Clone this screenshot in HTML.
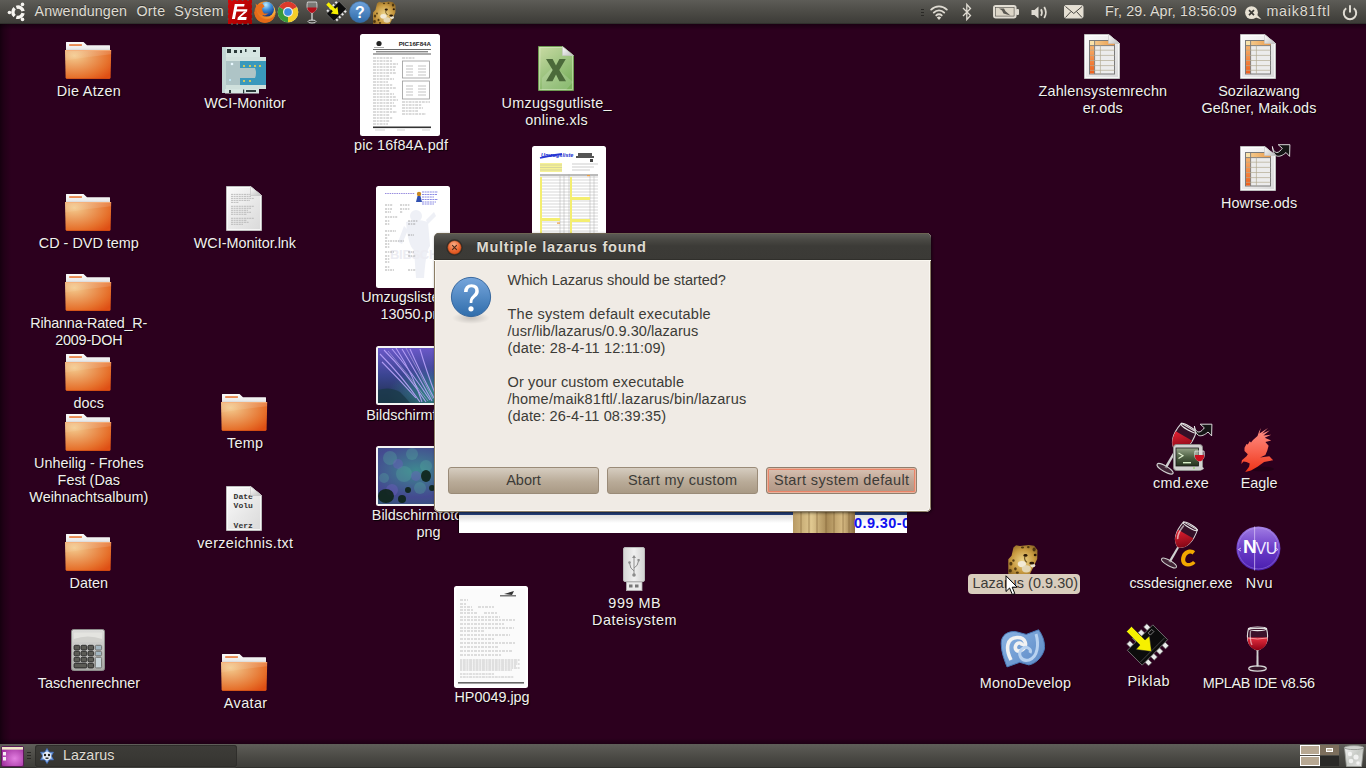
<!DOCTYPE html>
<html><head><meta charset="utf-8">
<style>
*{margin:0;padding:0;box-sizing:border-box}
html,body{width:1366px;height:768px;overflow:hidden;background:#2c001e;font-family:"Liberation Sans",sans-serif}
.abs{position:absolute}
#top{position:absolute;left:0;top:0;width:1366px;height:24px;background:linear-gradient(#5d5c57,#4a4944 55%,#3d3c38 95%,#30302c 96%)}
#bot{position:absolute;left:0;top:744px;width:1366px;height:24px;background:linear-gradient(#5f5e59,#4c4b46 50%,#3e3d39 95%,#30302c 96%)}
.pt{position:absolute;top:3px;font-size:14.3px;color:#dfdbd2;line-height:17px;white-space:pre;text-shadow:0 -1px 0 rgba(0,0,0,.35)}
.lbl{position:absolute;font-size:14.4px;line-height:17px;color:#f2f0ee;text-align:center;white-space:pre;text-shadow:1px 1px 1px rgba(0,0,0,.9)}
svg{position:absolute;overflow:visible}
#dlg{position:absolute;left:434px;top:233px;width:497px;height:279px;border-radius:5px 5px 5px 5px;background:#f0ebe5;box-shadow:inset 0 0 0 1px #8c7e66, inset 0 0 0 2px #faf7f2, 1px 1px 3px rgba(0,0,0,.55);overflow:hidden}
#dlg .tb{position:absolute;left:0;top:0;width:497px;height:27px;background:linear-gradient(#5a5954 4%,#4a4944 25%,#3c3b37 50%,#3b3a36);border-bottom:1px solid #302f2b;box-shadow:0 1px 0 #faf7f0, inset 0 1px 0 #6c6452}
#dlg .tt{position:absolute;left:42.5px;top:6px;font-weight:bold;font-size:14.6px;line-height:17px;color:#dfdbd2;white-space:pre;letter-spacing:0.73px;text-shadow:0 -1px 0 rgba(0,0,0,.5)}
#dlg .msg{position:absolute;left:73.5px;top:38.5px;font-size:14.55px;line-height:17px;color:#3c3b37;white-space:pre}
.btn{position:absolute;top:234px;height:27px;border:1px solid #9a8b78;border-radius:3px;background:linear-gradient(#d6cdc0,#b9ab98 55%,#a99a85);font-size:14.5px;line-height:25px;color:#3c3b37;text-align:center;white-space:pre}
</style></head><body>


<svg width="0" height="0" style="position:absolute">
 <defs>
  <linearGradient id="ftab" x1="0" y1="0" x2="0" y2="1"><stop offset="0" stop-color="#fbfbfb"/><stop offset="0.7" stop-color="#ececec"/><stop offset="1" stop-color="#cfcfcf"/></linearGradient>
  <radialGradient id="fbody" cx="0.2" cy="0.2" r="1.0"><stop offset="0" stop-color="#f4cb8e"/><stop offset="0.35" stop-color="#eca061"/><stop offset="0.75" stop-color="#e6712c"/><stop offset="1" stop-color="#df4f14"/></radialGradient>
  <linearGradient id="fshine" x1="0" y1="0" x2="0" y2="1"><stop offset="0" stop-color="#fff" stop-opacity="0.18"/><stop offset="1" stop-color="#fff" stop-opacity="0.05"/></linearGradient>
  <radialGradient id="cheg" cx="0.5" cy="0.55" r="0.65"><stop offset="0" stop-color="#ecd48a"/><stop offset="0.6" stop-color="#c89a40"/><stop offset="1" stop-color="#8a6424"/></radialGradient>
  <symbol id="cheetah" viewBox="0 0 24 24" overflow="visible">
    <path d="M1 24 L1 12.5 L3.5 9.8 L5 3.5 L7 1.8 L10 2.4 L17 1.6 L21 2.2 L23.6 5.5 L23.4 12.4 L17.8 24 Z" fill="url(#cheg)"/>
    <g fill="#3a2608" opacity=".8"><ellipse cx="3" cy="16" rx="1.2" ry="1.5"/><ellipse cx="2.5" cy="21.5" rx="1.3" ry="1.4"/><ellipse cx="6.5" cy="20" rx="1" ry="1.2"/><ellipse cx="8" cy="23" rx="1.2" ry="0.9"/><ellipse cx="5" cy="13.5" rx="0.9" ry="1"/><ellipse cx="12" cy="3.5" rx="1.2" ry="0.8"/><ellipse cx="16.5" cy="3.2" rx="1" ry="0.8"/><ellipse cx="21" cy="5" rx="1.2" ry="1.5"/></g>
    <ellipse cx="11.5" cy="16.3" rx="3.2" ry="2.4" fill="#f2ead6"/>
    <ellipse cx="15" cy="20" rx="3.5" ry="2.8" fill="#e6dcc0" opacity=".9"/>
    <ellipse cx="20" cy="17.5" rx="2" ry="1.4" fill="#ece4d0"/>
    <g fill="#2a1806"><ellipse cx="14.3" cy="9.6" rx="1.6" ry="1.1"/><ellipse cx="21.8" cy="9.3" rx="1.1" ry="1"/><ellipse cx="19.2" cy="15.6" rx="1.9" ry="1.1"/></g>
    <path d="M13.8 10.5 Q13 13 15.5 15" stroke="#3a2608" stroke-width="0.9" fill="none" opacity=".7"/>
  </symbol>
  <symbol id="folder" viewBox="0 0 46 38" overflow="visible">
    <path d="M1 0.3 Q1 0 1.5 0 L18.5 0 L22 3.2 L44.6 3.2 Q45 3.2 45 3.7 L45 9 L1 9Z" fill="url(#ftab)"/>
    <rect x="4.2" y="2.1" width="12.7" height="1.9" fill="#e98a52"/>
    <path d="M0 8 L46.2 8 L45.6 35.6 Q45.5 37 44.2 37 L2 37 Q0.7 37 0.6 35.6Z" fill="url(#fbody)"/>
    <path d="M0.05 8 L46.2 8 L46 12.2 Q24 14.5 0.2 18.5Z" fill="url(#fshine)"/>
    <path d="M0.3 8.5 L45.9 8.5" stroke="#f6b07a" stroke-width="1" opacity=".8"/>
    <path d="M2 36.5 L44.2 36.5" stroke="#c4420e" stroke-width="1" opacity=".5"/>
  </symbol>
 </defs>
</svg>

<!-- DESKTOP -->
<div class="abs" style="left:0;top:24px;width:11px;height:720px;background:linear-gradient(to right,rgba(0,0,0,.5),rgba(0,0,0,.25) 35%,rgba(0,0,0,0))"></div>
<div class="abs" style="left:0;top:24px;width:1366px;height:6px;background:linear-gradient(rgba(0,0,0,.38),rgba(0,0,0,0))"></div>
<div class="abs" style="left:0;top:738px;width:1366px;height:6px;background:linear-gradient(rgba(0,0,0,0),rgba(0,0,0,.32))"></div>
<div id="desk">
<svg style="left:65px;top:41.7px" width="46" height="38"><use href="#folder"/></svg>
<svg style="left:65px;top:194.4px" width="46" height="38"><use href="#folder"/></svg>
<svg style="left:65px;top:274.0px" width="46" height="38"><use href="#folder"/></svg>
<svg style="left:65px;top:354.0px" width="46" height="38"><use href="#folder"/></svg>
<svg style="left:65px;top:414.0px" width="46" height="38"><use href="#folder"/></svg>
<svg style="left:65px;top:534.0px" width="46" height="38"><use href="#folder"/></svg>
<svg style="left:221px;top:394.1px" width="46" height="38"><use href="#folder"/></svg>
<svg style="left:221px;top:654.0px" width="46" height="38"><use href="#folder"/></svg>
<svg width="0" height="0" style="position:absolute">
 <defs>
  <linearGradient id="pageg" x1="0" y1="0" x2="1" y2="1"><stop offset="0" stop-color="#fbfbfb"/><stop offset="1" stop-color="#d9d9d9"/></linearGradient>
  <linearGradient id="foldg" x1="0" y1="0" x2="1" y2="1"><stop offset="0" stop-color="#ffffff"/><stop offset="1" stop-color="#bdbdbd"/></linearGradient>
  <linearGradient id="odsh" x1="0" y1="0" x2="1" y2="0"><stop offset="0" stop-color="#f6d49a"/><stop offset="1" stop-color="#eb9a4a"/></linearGradient>
  <linearGradient id="odsc" x1="0" y1="0" x2="0" y2="1"><stop offset="0" stop-color="#f6c07a"/><stop offset="1" stop-color="#ef5f1c"/></linearGradient>
  <symbol id="page" viewBox="0 0 36 45" overflow="visible">
    <path d="M0.5 0.5 L24.5 0.5 L35.5 9.5 L35.5 44.5 L0.5 44.5Z" fill="url(#pageg)" stroke="#bdbdbd" stroke-width="1"/>
    <path d="M1.5 1.5 L24 1.5 L34.5 10 L34.5 43.5 L1.5 43.5Z" fill="none" stroke="#fff" stroke-width="1" opacity=".7"/>
    <path d="M24.5 0.5 L24.5 9.5 L35.5 9.5Z" fill="url(#foldg)" stroke="#c8c8c8" stroke-width="0.6"/>
  </symbol>
  <symbol id="ods" viewBox="0 0 36 45" overflow="visible">
    <use href="#page"/>
    <rect x="5.5" y="6.5" width="25" height="33.5" fill="#ececec" stroke="#7a7a7a" stroke-width="1"/>
    <rect x="6" y="7" width="24.5" height="4.6" fill="url(#odsh)"/>
    <rect x="6" y="7" width="4.6" height="32.5" fill="url(#odsc)"/>
    <rect x="6" y="7" width="4.6" height="4.6" fill="#f9e2aa"/>
    <g stroke="#7a7a7a" stroke-width="0.9"><path d="M10.6 6.5 V40 M5.5 11.6 H30.5"/></g>
    <g stroke="#b3ab92" stroke-width="0.7"><path d="M16.4 11.6 V40 M6 16.2 H30.5 M6 21.4 H30.5 M6 26.5 H30.5 M6 31.6 H30.5 M6 36.3 H30.5"/></g>
    <path d="M24.5 0.5 L24.5 9.5 L35.5 9.5Z" fill="url(#foldg)" stroke="#c8c8c8" stroke-width="0.6"/>
  </symbol>
  <symbol id="lines" viewBox="0 0 36 45" overflow="visible">
    <g stroke="#a8a8a8" stroke-width="0.7" stroke-dasharray="2 0.6">
      <path d="M5 8.4 H30 M5 10.4 H25 M5 12.4 H28 M5 14.4 H24 M5 16.4 H13 M5 20.3 H28 M5 22.3 H25 M5 24.3 H22 M5 26.3 H25 M5 28.3 H21 M5 32.3 H28 M5 34.3 H21 M5 36.3 H23 M5 38.3 H17"/>
    </g>
  </symbol>
  <symbol id="symlink" viewBox="4 3.5 18.5 13" overflow="visible">
    <path d="M4.4 6 C5 10 7 12 9 12 C11 12 13 9.5 14.3 7.8 L10.2 4.2 L21.9 4.2 L21.6 15.9 L18 12 C15 15 11 16.5 8.6 15.4 C6 14 4.5 10 4.4 6Z" fill="#141414" stroke="#ececec" stroke-width="0.9"/>
  </symbol>
  <linearGradient id="thumbsh" x1="0" y1="0" x2="0" y2="1"><stop offset="0" stop-color="#fff"/><stop offset="1" stop-color="#f4f4f4"/></linearGradient>
 </defs>
</svg>

<!-- WCI-Monitor device -->
<svg style="left:222px;top:46px" width="44" height="48" viewBox="0 0 44 48">
  <rect x="1" y="1" width="37" height="10" fill="#d6e6e2"/>
  <rect x="0" y="1" width="4" height="46" fill="#c2d6d4"/>
  <g fill="#2b3a3a"><rect x="5" y="3" width="4" height="4"/><rect x="12" y="4" width="3" height="3"/><rect x="18" y="4" width="2" height="3"/><rect x="23" y="3" width="1.5" height="3"/><rect x="31" y="4" width="3" height="2"/></g>
  <rect x="4" y="11" width="40" height="4" fill="#d2e2de"/>
  <rect x="4" y="15" width="40" height="24" fill="#aec4c6"/>
  <path d="M18 15 H44 V39 H18 V32 H33 Q35 27 33 22 H18Z" fill="#3a98bc"/>
  <g fill="#f2d44a"><circle cx="22" cy="20" r="1.1"/><circle cx="28" cy="20" r="1.1"/><circle cx="33" cy="20" r="1.1"/><circle cx="38" cy="20" r="1.1"/><circle cx="22" cy="35" r="1.1"/><circle cx="28" cy="35" r="1.1"/></g>
  <circle cx="10" cy="18" r="1.3" fill="#e8f8ff"/><circle cx="8" cy="34" r="1" fill="#c8f0ff"/>
  <rect x="4" y="39" width="40" height="4" fill="#cfe0dc"/>
  <rect x="3" y="43" width="34" height="4.5" fill="#d6e6e2"/>
  <g fill="#2b3a3a"><rect x="7" y="44" width="2" height="3"/><rect x="21" y="43.5" width="1.2" height="4"/><rect x="24" y="44" width="10" height="2"/></g>
</svg>

<!-- WCI-Monitor.lnk text doc -->
<svg style="left:226px;top:186px" width="36" height="45" viewBox="0 0 36 45"><use href="#page"/><use href="#lines"/><path d="M24.5 0.5 L24.5 9.5 L35.5 9.5Z" fill="url(#foldg)" stroke="#c8c8c8" stroke-width="0.6"/></svg>

<!-- verzeichnis.txt -->
<svg style="left:226px;top:486px" width="36" height="45" viewBox="0 0 36 45"><use href="#page"/>
  <g font-family="Liberation Mono" font-weight="bold" font-size="8" fill="#333"><text x="7.6" y="13.2">Date</text><text x="7.6" y="22">Volu</text><text x="7.6" y="42">Verz</text></g>
  <path d="M24.5 0.5 L24.5 9.5 L35.5 9.5Z" fill="url(#foldg)" stroke="#c8c8c8" stroke-width="0.6"/></svg>

<!-- Taschenrechner calculator -->
<svg style="left:71px;top:629px" width="34" height="42" viewBox="0 0 34 42">
  <defs><linearGradient id="calg" x1="0" y1="0" x2="0" y2="1"><stop offset="0" stop-color="#dcdcda"/><stop offset="1" stop-color="#a9a9a6"/></linearGradient></defs>
  <rect x="0.5" y="0.5" width="33" height="41" rx="2" fill="url(#calg)" stroke="#8c8c8a" stroke-width="1"/>
  <rect x="2.6" y="3.5" width="28.6" height="9.5" rx="1" fill="#e4e4e0"/>
  <path d="M2.6 10 Q17 5 31.2 10 V13 H2.6Z" fill="#d0d0cc"/>
  <g fill="#5b5b55" stroke="#262626" stroke-width="0.9">
    <rect x="3.1" y="16.3" width="5.6" height="4.7" rx="1.2"/><rect x="10" y="16.3" width="5.7" height="4.7" rx="1.2"/><rect x="17" y="16.3" width="5.6" height="4.7" rx="1.2"/>
    <rect x="3.1" y="22.3" width="5.6" height="4.5" rx="1.2"/><rect x="10" y="22.3" width="5.7" height="4.5" rx="1.2"/><rect x="17" y="22.3" width="5.6" height="4.5" rx="1.2"/>
    <rect x="3.1" y="28.3" width="5.6" height="4.5" rx="1.2"/><rect x="10" y="28.3" width="5.7" height="4.5" rx="1.2"/><rect x="17" y="28.3" width="5.6" height="4.5" rx="1.2"/>
    <rect x="3.1" y="34.3" width="12.6" height="4.6" rx="1.2"/><rect x="17" y="34.3" width="5.6" height="4.6" rx="1.2"/>
  </g>
  <g stroke="#6a6a66" stroke-width="0.9"><rect x="24.3" y="16.3" width="6.3" height="4.7" rx="1.2" fill="#a3b6c0"/><rect x="24.3" y="22.3" width="6.3" height="4.5" rx="1.2" fill="#a3b6c0"/><rect x="24.3" y="28.3" width="6.3" height="10.6" rx="1.2" fill="#c9d5da"/></g>
</svg>

<!-- pic 16f84A.pdf thumbnail -->
<svg style="left:360px;top:34px" width="80" height="102" viewBox="0 0 80 102">
  <rect x="0" y="0" width="80" height="102" rx="2.5" fill="#fff"/>
  <circle cx="19" cy="9.5" r="2.6" fill="#222"/><rect x="14" y="13" width="10" height="0.6" fill="#777"/>
  <text x="71" y="12" font-family="Liberation Sans" font-weight="bold" font-size="6.2" fill="#222" text-anchor="end">PIC16F84A</text>
  <rect x="13" y="15" width="58" height="0.8" fill="#444"/>
  <rect x="16" y="17" width="52" height="1.4" fill="#8a8a8a"/>
  <rect x="13" y="19.6" width="58" height="0.8" fill="#333"/>
  <g stroke="#9a9a9a" stroke-width="0.7" stroke-dasharray="3 0.8 2 0.8">
   <path d="M13 24 H33 M13 27 H32 M13 30 H38 M13 33 H36 M13 36 H35 M13 39 H36 M13 42 H30 M13 45 H34 M13 48 H28 M13 51 H33 M13 54 H36 M13 57 H30 M13 60 H34 M13 63 H36 M13 66 H38 M13 69 H34 M13 72 H36 M13 75 H32 M13 78 H37 M13 81 H30 M13 84 H33 M13 87 H30 M13 90 H28"/>
   <path d="M42 24 H55 M42 68 H70 M42 71 H62 M42 74 H63 M42 77 H58 M42 80 H66"/>
  </g>
  <rect x="42.5" y="27" width="27" height="17" fill="none" stroke="#999" stroke-width="0.8"/>
  <rect x="42.5" y="47" width="27" height="18" fill="none" stroke="#999" stroke-width="0.8"/>
  <g stroke="#aaa" stroke-width="0.7"><path d="M46 32 H53 M58 32 H66 M46 35 H53 M58 35 H66 M46 38 H53 M58 38 H66 M46 41 H53 M58 41 H66 M46 52 H53 M58 52 H66 M46 55 H53 M58 55 H66 M46 58 H53 M58 58 H66 M46 61 H53 M58 61 H66"/></g>
  <rect x="13" y="92.5" width="58" height="1.6" fill="#333"/>
  <g stroke="#bbb" stroke-width="0.6"><path d="M15 96 H25 M37 96 H45 M62 96 H70"/></g>
</svg>

<!-- Umzugsgutliste xls -->
<svg style="left:538px;top:46px" width="36" height="45" viewBox="0 0 36 45">
  <defs><linearGradient id="xlsg" x1="0" y1="0" x2="0.6" y2="1"><stop offset="0" stop-color="#cadba4"/><stop offset="0.5" stop-color="#a2c684"/><stop offset="1" stop-color="#7cb25e"/></linearGradient></defs>
  <path d="M0.5 0.5 L24.5 0.5 L35.5 9.5 L35.5 44.5 L0.5 44.5Z" fill="url(#xlsg)" stroke="#6e9a52" stroke-width="1"/>
  <path d="M2 1.5 L24 1.5 L34.5 10 L34.5 43.5 L1.5 43.5Z" fill="none" stroke="#e6f0d0" stroke-width="0.8" opacity=".6"/>
  <path d="M4 32 L16 20 L35 36 L28 44 L4 44Z" fill="#fff" opacity=".15"/>
  <path d="M8 13 H14.6 L18 19.5 L21.4 13 H27.8 L21.3 24 L28 35.2 H21.4 L18 28.6 L14.5 35.2 H8 L14.7 24Z" fill="#4b6a3a"/>
  <path d="M24.5 0.5 L24.5 9.5 L35.5 9.5Z" fill="url(#foldg)" stroke="#c8c8c8" stroke-width="0.6"/>
</svg>

<!-- Umzugsliste png thumb behind dialog -->
<svg style="left:532px;top:146px" width="74" height="102" viewBox="0 0 74 102">
  <rect x="0" y="0" width="74" height="102" rx="2.5" fill="#fff"/>
  <path d="M8 12 Q20 9 30 8" stroke="#2a3ad8" stroke-width="1.8" fill="none"/>
  <text x="9" y="11" font-family="Liberation Sans" font-style="italic" font-weight="bold" font-size="5.5" fill="#2030d0">Umzugsliste</text>
  <g fill="#555"><rect x="46" y="7" width="14" height="3"/><rect x="44" y="10" width="18" height="2"/></g>
  <rect x="58" y="13" width="3" height="3" fill="#444"/>
  <g stroke="#999" stroke-width="0.5"><path d="M40 18 H66 M40 21 H62 M40 24 H58"/></g>
  <rect x="8" y="17" width="22" height="9" fill="#f6f296"/>
  <g stroke="#aaa" stroke-width="0.4"><path d="M8 19 H30 M8 21.5 H30 M8 24 H30"/></g>
  <rect x="8" y="28" width="58" height="2" fill="#bbb"/>
  <g stroke="#a8a8a8" stroke-width="0.45"><path d="M8 31 H66 M8 34 H66 M8 37 H66 M8 40 H66 M8 43 H66 M8 46 H66 M8 49 H66 M8 52 H66 M8 55 H66 M8 58 H66 M8 61 H66 M8 64 H66 M8 67 H66 M8 70 H66 M8 73 H66 M8 76 H66 M8 79 H66 M8 82 H66 M8 85 H66 M8 88 H66 M8 91 H66 M37 28 V94 M28 30 V94 M32 30 V94 M58 30 V94 M62 30 V94"/></g>
  <g fill="#f4ee70"><rect x="8" y="31" width="2" height="60"/><rect x="38" y="31" width="2" height="60"/><rect x="10" y="72" width="18" height="3"/><rect x="40" y="51" width="18" height="3"/><rect x="40" y="73" width="18" height="3"/></g>
  <g fill="#f0a040"><rect x="55" y="29" width="3" height="1.2"/><rect x="25" y="76.5" width="3" height="1.2"/></g>
</svg>

<!-- Umzugsliste_13050.png thumb -->
<svg style="left:376px;top:186px" width="74" height="102" viewBox="0 0 74 102">
  <rect x="0" y="0" width="74" height="102" rx="2.5" fill="#fff"/>
  <g fill="#eef0f6"><ellipse cx="40" cy="30" rx="6" ry="6"/><path d="M30 36 Q40 32 52 36 L54 60 Q50 64 48 92 L40 92 L38 64 Q32 60 30 36Z"/><path d="M28 40 L22 56 L26 58 L32 44Z"/><path d="M52 38 L60 30 L58 26 L50 34Z"/></g>
  <text x="14" y="73" font-family="Liberation Sans" font-weight="bold" font-size="13" fill="#ececf2" letter-spacing="-0.3">BIBSCH</text>
  <g stroke="#6a5ad0" stroke-width="0.7" stroke-dasharray="1.5 0.8"><path d="M9 7.5 H39"/></g>
  <circle cx="43" cy="8" r="2.2" fill="#c88820"/><path d="M41.5 10 L40 16 L46 16 L44.5 10Z" fill="#3050b0"/>
  <g stroke="#5a5ad8" stroke-width="0.7" stroke-dasharray="2 0.6"><path d="M46 6 H62 M46 8.5 H61 M46 11 H58 M46 13.5 H62 M46 16 H60 M46 18 H58"/></g>
  <g stroke="#777" stroke-width="0.6" stroke-dasharray="2 0.8 1.5 0.8"><path d="M9 19 H17 M24 19 H34 M9 23 H16 M24 23 H34 M9 26 H15 M24 26 H27 M9 31 H22 M9 35 H14 M32 35 H42 M9 38 H14 M32 38 H40 M9 45 H20 M9 49 H14 M32 49 H38 M9 52 H12 M9 55 H28 M9 58 H14 M9 61 H14 M9 66 H18 M32 66 H38 M9 70 H14 M32 70 H40 M9 73 H14 M9 76 H14 M9 81 H14 M9 84 H18 M32 84 H40"/></g>
</svg>

<!-- Bildschirmfoto thumbs (partly behind dialog) -->
<svg style="left:376px;top:346px" width="100" height="59" viewBox="0 0 100 59">
  <defs><linearGradient id="bs1" x1="0" y1="0" x2="0" y2="1"><stop offset="0" stop-color="#6a58c8"/><stop offset="0.5" stop-color="#3a4490"/><stop offset="1" stop-color="#1e3048"/></linearGradient>
  <radialGradient id="bs1t" cx="0.6" cy="0.85" r="0.5"><stop offset="0" stop-color="#3aa0a0" stop-opacity=".8"/><stop offset="1" stop-color="#3aa0a0" stop-opacity="0"/></radialGradient></defs>
  <rect x="0" y="0" width="100" height="59" rx="2.5" fill="#f4f4f4"/>
  <rect x="2" y="2" width="96" height="55" fill="url(#bs1)"/>
  <rect x="2" y="2" width="96" height="55" fill="url(#bs1t)"/>
  <g stroke="#c0a8ff" stroke-width="1.1" opacity=".85" fill="none">
    <path d="M4 8 Q26 30 44 56"/><path d="M8 4 Q30 26 50 56"/><path d="M16 3 Q34 24 54 54"/><path d="M26 3 Q40 26 56 55"/><path d="M34 3 Q44 26 58 52"/><path d="M44 3 Q50 24 60 50"/><path d="M6 16 Q24 34 40 52"/><path d="M20 2 Q38 30 46 56"/>
  </g>
  <g stroke="#e0d0ff" stroke-width="0.6" opacity=".7" fill="none"><path d="M12 5 Q32 28 52 55"/><path d="M30 2 Q42 24 57 53"/></g>
  <path d="M2 44 Q14 40 24 46 Q30 52 34 57 H2Z" fill="#1a3a48" opacity=".8"/>
</svg>
<svg style="left:376px;top:446px" width="100" height="60" viewBox="0 0 100 60">
  <defs><radialGradient id="bs2" cx="0.4" cy="0.4" r="0.8"><stop offset="0" stop-color="#3e8890"/><stop offset="0.6" stop-color="#444a90"/><stop offset="1" stop-color="#2e5a70"/></radialGradient></defs>
  <rect x="0" y="0" width="100" height="60" rx="2.5" fill="#f4f4f4"/>
  <rect x="2" y="2" width="96" height="56" fill="url(#bs2)"/>
  <g fill="#58b0a0" opacity=".3"><circle cx="14" cy="12" r="7"/><circle cx="36" cy="8" r="6"/><circle cx="28" cy="28" r="8"/><circle cx="8" cy="32" r="5"/><circle cx="50" cy="20" r="6"/><circle cx="44" cy="42" r="6"/></g>
  <g fill="#7060c0" opacity=".4"><circle cx="22" cy="18" r="5"/><circle cx="40" cy="30" r="5"/><circle cx="16" cy="44" r="6"/></g>
  <g fill="#0e2418" opacity=".9"><ellipse cx="10" cy="50" rx="8" ry="7"/><circle cx="26" cy="53" r="4"/><circle cx="32" cy="44" r="3"/><ellipse cx="50" cy="30" rx="5" ry="6"/><circle cx="56" cy="42" r="3"/></g>
</svg>

<!-- HP0049.jpg -->
<svg style="left:454px;top:586px" width="74" height="102" viewBox="0 0 74 102">
  <rect x="0" y="0" width="74" height="102" rx="2.5" fill="#fff"/>
  <rect x="2.5" y="2.5" width="69" height="97" fill="#fbfbfb"/>
  <path d="M50 8 L60 5 L58 9Z" fill="#333"/><rect x="46" y="9" width="16" height="1.5" fill="#777"/>
  <g stroke="#999" stroke-width="0.6" stroke-dasharray="3 1 2 1">
   <path d="M6 14 H14 M6 18 H12 M6 21 H18 M24 21 H40 M6 24 H20 M6 27 H24 M30 27 H44 M6 31 H46 M6 34 H62 M6 38 H50 M6 42 H60 M6 45 H30 M6 49 H56 M6 53 H40 M6 57 H62 M6 61 H44 M6 65 H58 M6 69 H48"/>
  </g>
  <g stroke="#8a8a8a" stroke-width="0.5" stroke-dasharray="2 0.7 3 0.7"><path d="M6 74 H66 M6 76 H64 M6 78 H66 M6 80 H62 M6 82 H66 M6 84 H58 M6 88 H40 M6 91 H60"/></g>
  <rect x="4" y="96" width="66" height="1.6" fill="#666"/>
</svg>

<!-- USB -->
<svg style="left:623px;top:547px" width="22" height="44" viewBox="0 0 22 44">
  <defs><linearGradient id="usbg" x1="0" y1="0" x2="1" y2="0"><stop offset="0" stop-color="#d4d4d4"/><stop offset="0.5" stop-color="#f0f0f0"/><stop offset="1" stop-color="#d2d2d2"/></linearGradient></defs>
  <rect x="0.5" y="0.5" width="21" height="34" rx="1.5" fill="url(#usbg)" stroke="#b8b8b8" stroke-width="1"/>
  <rect x="3.5" y="35" width="15.5" height="8.6" fill="#eaeaea" stroke="#b0b0b0" stroke-width="0.8"/>
  <rect x="6" y="37.5" width="3.5" height="3" fill="#777"/><rect x="12" y="37.5" width="3.5" height="3" fill="#777"/>
  <g stroke="#8c8c8c" stroke-width="1" fill="none"><path d="M11 10 V28 M11 24 Q7 22 6.5 16 M11 21 Q15 19 15.5 14"/></g>
  <path d="M11 8 L9 11 H13Z" fill="#8c8c8c"/><circle cx="11" cy="28" r="1.8" fill="#8c8c8c"/><circle cx="6.5" cy="15.5" r="1.3" fill="#8c8c8c"/><rect x="14.5" y="12" width="2.2" height="2.2" fill="#8c8c8c"/>
</svg>

<!-- ODS -->
<svg style="left:1084px;top:34px" width="36" height="45" viewBox="0 0 36 45"><use href="#ods"/></svg>
<svg style="left:1240px;top:34px" width="36" height="45" viewBox="0 0 36 45"><use href="#ods"/></svg>
<svg style="left:1240px;top:146px" width="36" height="45" viewBox="0 0 36 45"><use href="#ods"/></svg>
<svg style="left:1272px;top:143.5px" width="18.5" height="13" viewBox="0 0 18.5 13"><use href="#symlink"/></svg>

<!-- cmd.exe -->
<svg style="left:1150px;top:420px" width="66" height="58" viewBox="0 0 66 58">
  <defs>
    <linearGradient id="wineg" x1="0" y1="0" x2="1" y2="1"><stop offset="0" stop-color="#e02030"/><stop offset="1" stop-color="#6a0010"/></linearGradient>
    <linearGradient id="scrg" x1="0" y1="0" x2="0" y2="1"><stop offset="0" stop-color="#95a488"/><stop offset="0.5" stop-color="#4e6144"/><stop offset="1" stop-color="#26331f"/></linearGradient>
  </defs>
  <g transform="translate(-6 1) rotate(30 30 28) translate(30 28) scale(1.08) translate(-30 -28)">
    <path d="M24 4 L40 4 C42 14 42 24 32 29 C22 24 22 14 24 4Z" fill="rgba(60,30,50,.55)" stroke="#d8d8d8" stroke-width="1"/>
    <path d="M23.2 13 L40.8 13 C40.5 22 38 26.5 32 29 C26 26.5 23.5 22 23.2 13Z" fill="url(#wineg)"/>
    <ellipse cx="32" cy="4.5" rx="8" ry="1.8" fill="none" stroke="#e8e8e8" stroke-width="1.1"/>
    <path d="M31 29 L33 29 L33.2 47 L30.8 47Z" fill="#cfcfcf"/>
    <ellipse cx="32" cy="48" rx="8.5" ry="2.6" fill="rgba(80,60,70,.6)" stroke="#d0d0d0" stroke-width="1"/>
  </g>
  <rect x="23.5" y="24.5" width="29" height="26" rx="3" fill="#d2d2d0" stroke="#8a8a88" stroke-width="1"/>
  <rect x="26" y="28" width="22.5" height="18" fill="url(#scrg)" stroke="#1a1a1a" stroke-width="0.8"/>
  <path d="M28.5 33 L33 35.8 L28.5 38.6" fill="none" stroke="#e0f0d0" stroke-width="1.2"/>
  <rect x="33" y="42" width="8" height="1.4" fill="#d8f0c8"/>
  <circle cx="44" cy="48" r="0.8" fill="#7ad040"/>
  <path d="M45 31 L54 31 C55 36 54 40 49.5 41.5 C45 40 44 36 45 31Z" fill="rgba(230,230,230,.4)" stroke="#e0e0e0" stroke-width="0.8"/>
  <path d="M44.8 35 L54.2 35 C54 39 52.5 40.8 49.5 41.5 C46.5 40.8 45 39 44.8 35Z" fill="#c81020"/>
  <rect x="49" y="41.5" width="1.2" height="6" fill="#d0d0d0"/>
  <ellipse cx="49.6" cy="48.5" rx="4.2" ry="1.4" fill="#cfcfcf"/>
  <svg x="44" y="3.5" width="18.5" height="13" viewBox="0 0 18.5 13"><use href="#symlink"/></svg>
</svg>

<!-- Eagle -->
<svg style="left:1238px;top:425px" width="40" height="50" viewBox="0 0 40 50">
  <defs><linearGradient id="eagg" x1="0" y1="0" x2="0" y2="1"><stop offset="0" stop-color="#ff9088"/><stop offset="0.55" stop-color="#f8604c"/><stop offset="1" stop-color="#ee3418"/></linearGradient></defs>
  <ellipse cx="24" cy="44" rx="12" ry="2.5" fill="#000" opacity=".25"/>
  <path d="M22.8 2.9 L21.5 8.5 L30 2.9 L24.1 8.8 L31.9 5.2 L25.4 10.4 L33.2 9.8 L26.7 12.7 L33.2 15.6 L27.4 16.9 L30.6 20.8 L29.3 25.4 L27.4 30 L22.1 32.6 L31.3 31.3 L35.2 35.2 L26.1 37.1 L19.5 41.7 L13 45.6 L7.2 46.9 L11.1 41.7 L11.7 38.4 L8.5 37.1 L5.5 36.5 L3.3 39.1 L3.9 35.2 L8.5 31.3 L9.8 29.3 L6.5 26.1 L6.5 22.8 L8.5 18.9 L9.8 19.5 L11.7 16.3 L13 17.6 L15 15 L19.5 11.1 L20.8 7.2 Z" fill="url(#eagg)"/>
</svg>

<!-- cssdesigner -->
<svg style="left:1150px;top:520px" width="50" height="56" viewBox="0 0 50 56">
  <g transform="rotate(30 30 24)">
    <path d="M22 3 L38 3 C40 13 40 23 30 28 C20 23 20 13 22 3Z" fill="rgba(60,30,50,.55)" stroke="#d8d8d8" stroke-width="1"/>
    <path d="M21.2 12.5 L38.8 12.5 C38.5 21.5 36 25.5 30 28 C24 25.5 21.5 21.5 21.2 12.5Z" fill="url(#wineg)"/>
    <path d="M24 6 C23 12 23.5 18 25.5 21" stroke="#fff" stroke-width="1.6" opacity=".6" fill="none"/>
    <ellipse cx="30" cy="3.5" rx="8" ry="1.8" fill="none" stroke="#e8e8e8" stroke-width="1.1"/>
    <path d="M29 28 L31 28 L31.2 45 L28.8 45Z" fill="#cfcfcf"/>
    <ellipse cx="30" cy="46" rx="8.5" ry="2.6" fill="rgba(80,60,70,.6)" stroke="#d0d0d0" stroke-width="1"/>
  </g>
  <path d="M45 31.5 C43 28.5 35 28.5 32 35 C29.5 41 32 46.5 38 46.5 C41 46.5 44 45 45.5 43 L43 41 C41.5 42.5 40 43 38.5 43 C35.5 43 34.5 40.5 35.8 37 C37 33.5 41 32.5 42.5 34.5Z" fill="#f2a800"/>
</svg>

<!-- Nvu -->
<svg style="left:1236px;top:526px" width="45" height="45" viewBox="0 0 45 45">
  <defs><linearGradient id="nvug" x1="0" y1="0" x2="0" y2="1"><stop offset="0" stop-color="#a27ee4"/><stop offset="0.5" stop-color="#6a3cc8"/><stop offset="1" stop-color="#4a1eae"/></linearGradient></defs>
  <circle cx="22.4" cy="22.4" r="22" fill="url(#nvug)"/>
  <circle cx="22.4" cy="22.4" r="20.5" fill="none" stroke="#c0a8f0" stroke-width="0.6" opacity=".6"/>
  <rect x="18.2" y="0.5" width="0.9" height="44" fill="#d8c8f8" opacity=".8"/>
  <text x="7" y="28" font-family="Liberation Sans" font-weight="bold" font-size="19" fill="#fff" transform="scale(1 0.95)">N</text>
  <text x="19.6" y="28" font-family="Liberation Sans" font-size="16" fill="#f0eaff" letter-spacing="-0.5">VU</text>
  <path d="M5 22 L2.5 23.5 L5 25 M39.5 22 L42 23.5 L39.5 25" fill="none" stroke="#e8dcff" stroke-width="0.8"/>
</svg>

<!-- Lazarus cheetah + label pill -->
<svg style="left:1007px;top:543px" width="31" height="31" viewBox="0 0 24 24"><use href="#cheetah"/></svg>
<div class="abs" style="left:968px;top:574px;width:112px;height:20px;border-radius:4px;background:#d9cdbd"></div>
<div class="abs" style="left:972.5px;top:574.5px;font-size:14.4px;line-height:17px;color:#3c3b37;white-space:pre;letter-spacing:0.05px">Lazarus (0.9.30)</div>
<svg style="left:1005px;top:575px" width="14" height="21" viewBox="0 0 14 21">
  <path d="M1 0.8 L1 16.5 L4.6 13 L7.4 19.6 L9.8 18.6 L7.2 12.2 L12.2 12.2Z" fill="#fff" stroke="#000" stroke-width="1"/>
</svg>

<!-- MonoDevelop -->
<svg style="left:995px;top:622px" width="60" height="50" viewBox="0 0 60 50">
  <defs><linearGradient id="mdg" x1="0" y1="0" x2="1" y2="1"><stop offset="0" stop-color="#8cb4e4"/><stop offset="1" stop-color="#5a88c4"/></linearGradient></defs>
  <path d="M6.2 21.5 C6 13 13 8.5 21.5 9.8 L31.2 12.4 L43.6 7.8 C48 14 50 20 49.4 27.3 C47 36 40 42 33.8 42.9 L24.7 40.3 L12 44.9 C9 37 6.2 30 6.2 21.5Z" fill="url(#mdg)" stroke="#4a7ab8" stroke-width="1"/>
  <path d="M16 38 C10 26 12 16 22 15.5 C31 15 33 24 27 28 C22 31 19 27 21 23 C23 19.5 28 21 27 24" fill="none" stroke="#f2f2f2" stroke-width="3.6"/>
  <path d="M41 12 C44 22 43 35 34 38 C26 40 22 32 27 27 C31 23 37 27 35 31" fill="none" stroke="#b8d2f0" stroke-width="3"/>
</svg>

<!-- Piklab -->
<svg style="left:1120px;top:620px" width="60" height="54" viewBox="0 0 60 54">
  <g transform="translate(27.5 25) rotate(-45)">
    <g fill="#eaeaea" stroke="#555" stroke-width="0.6"><rect x="-14" y="10" width="4.5" height="5.5"/><rect x="-6" y="10" width="4.5" height="5.5"/><rect x="2" y="10" width="4.5" height="5.5"/><rect x="10" y="10" width="4.5" height="5.5"/>
    <rect x="-14" y="-15.5" width="4.5" height="5.5"/><rect x="-6" y="-15.5" width="4.5" height="5.5"/><rect x="2" y="-15.5" width="4.5" height="5.5"/><rect x="10" y="-15.5" width="4.5" height="5.5"/></g>
    <rect x="-18" y="-10.5" width="36" height="21" fill="#0c0c0c" stroke="#8a8a8a" stroke-width="0.7"/>
    <path d="M-17 7 H17" stroke="#666" stroke-width="0.6"/>
    <path d="M9 -8 h5 v3 h-5z" fill="none" stroke="#bbb" stroke-width="0.6"/>
  </g>
  <path d="M6.5 11.5 L11.5 6.5 L25 20 L29.5 16 L31.5 31.5 L16 29.5 L20 25 Z" fill="#f6f000" stroke="#1a1a30" stroke-width="0.5"/>
</svg>

<!-- MPLAB wine -->
<svg style="left:1245px;top:626px" width="26" height="47" viewBox="0 0 26 47">
  <defs><linearGradient id="wine2" x1="0" y1="0" x2="0" y2="1"><stop offset="0" stop-color="#e83040"/><stop offset="1" stop-color="#8a0014"/></linearGradient></defs>
  <path d="M3.5 2.5 L21.5 2.5 C23.5 10 24 20 12.5 24.5 C1 20 1.5 10 3.5 2.5Z" fill="rgba(80,40,60,.45)" stroke="#dcdcdc" stroke-width="1.1"/>
  <path d="M2.6 11.5 L22.4 11.5 C22.4 19 19.5 22.5 12.5 24.5 C5.5 22.5 2.6 19 2.6 11.5Z" fill="url(#wine2)"/>
  <path d="M3 12 Q12.5 14 22 12" stroke="#ffd0d0" stroke-width="0.8" fill="none" opacity=".8"/>
  <path d="M5.5 5 C5 10 5.5 16 7 19" stroke="#fff" stroke-width="1.3" opacity=".55" fill="none"/>
  <ellipse cx="12.5" cy="2.8" rx="9" ry="1.8" fill="none" stroke="#e8e8e8" stroke-width="1.1"/>
  <path d="M11.6 24.5 L13.4 24.5 L13.6 41 L11.4 41Z" fill="#d0d0d0"/>
  <ellipse cx="12.5" cy="42.5" rx="8.8" ry="2.6" fill="rgba(60,40,50,.5)" stroke="#d8d8d8" stroke-width="1.2"/>
</svg>

<div class="lbl" style="left:8.8px;top:83px;width:160px;letter-spacing:0.28px;text-indent:0.28px">Die Atzen</div>
<div class="lbl" style="left:8.8px;top:235px;width:160px">CD - DVD temp</div>
<div class="lbl" style="left:8.8px;top:315px;width:160px;letter-spacing:-0.19px;text-indent:-0.19px">Rihanna-Rated_R-
2009-DOH</div>
<div class="lbl" style="left:8.8px;top:395px;width:160px">docs</div>
<div class="lbl" style="left:8.8px;top:455px;width:160px">Unheilig - Frohes
Fest (Das
Weihnachtsalbum)</div>
<div class="lbl" style="left:8.8px;top:575px;width:160px">Daten</div>
<div class="lbl" style="left:8.9px;top:675px;width:160px">Taschenrechner</div>
<div class="lbl" style="left:165.0px;top:95px;width:160px;letter-spacing:0.09px;text-indent:0.09px">WCI-Monitor</div>
<div class="lbl" style="left:164.9px;top:235px;width:160px">WCI-Monitor.lnk</div>
<div class="lbl" style="left:165.0px;top:435px;width:160px;letter-spacing:0.27px;text-indent:0.27px">Temp</div>
<div class="lbl" style="left:165.2px;top:535px;width:160px;letter-spacing:0.32px;text-indent:0.32px">verzeichnis.txt</div>
<div class="lbl" style="left:165.5px;top:695px;width:160px;letter-spacing:0.4px;text-indent:0.4px">Avatar</div>
<div class="lbl" style="left:321.0px;top:137px;width:160px;letter-spacing:0.15px;text-indent:0.15px">pic 16f84A.pdf</div>
<div class="lbl" style="left:476.6px;top:95px;width:160px;letter-spacing:0.26px;text-indent:0.26px">Umzugsgutliste_
online.xls</div>
<div class="lbl" style="left:334.5px;top:306px;width:160px">13050.png</div>
<div class="lbl" style="left:348.5px;top:524px;width:160px">png</div>
<div class="lbl" style="left:412.0px;top:689px;width:160px">HP0049.jpg</div>
<div class="lbl" style="left:554.5px;top:595px;width:160px;letter-spacing:0.53px;text-indent:0.53px">999 MB
Dateisystem</div>
<div class="lbl" style="left:1022.8px;top:83px;width:160px;letter-spacing:0.19px;text-indent:0.19px">Zahlensystemrechn
er.ods</div>
<div class="lbl" style="left:1179.0px;top:83px;width:160px;letter-spacing:0.09px;text-indent:0.09px">Sozilazwang
Geßner, Maik.ods</div>
<div class="lbl" style="left:1179.1px;top:195px;width:160px">Howrse.ods</div>
<div class="lbl" style="left:1101.0px;top:475px;width:160px;letter-spacing:0.23px;text-indent:0.23px">cmd.exe</div>
<div class="lbl" style="left:1179.1px;top:475px;width:160px">Eagle</div>
<div class="lbl" style="left:1101.0px;top:575px;width:160px">cssdesigner.exe</div>
<div class="lbl" style="left:1179.1px;top:575px;width:160px;letter-spacing:0.65px;text-indent:0.65px">Nvu</div>
<div class="lbl" style="left:945.3px;top:675px;width:160px;letter-spacing:0.24px;text-indent:0.24px">MonoDevelop</div>
<div class="lbl" style="left:1068.5px;top:673px;width:160px;letter-spacing:0.6px;text-indent:0.6px">Piklab</div>
<div class="lbl" style="left:1178.9px;top:675px;width:160px;letter-spacing:-0.26px;text-indent:-0.26px">MPLAB IDE v8.56</div>
<div class="lbl" style="left:361.2px;top:289px;text-align:left">Umzugsliste_201104</div>
<div class="lbl" style="left:366.2px;top:407px;text-align:left">Bildschirmfoto-Lazarus</div>
<div class="lbl" style="left:371.8px;top:507px;text-align:left">Bildschirmfoto-Lazarus</div>
</div>

<!-- TOP PANEL -->
<div id="top">
  <svg style="left:0;top:0" width="30" height="24" viewBox="0 0 30 24">
    <g fill="none" stroke="#f6f4f0" stroke-width="3.4">
      <path d="M23.09 13.15 A5.15 5.15 0 0 1 16.35 17.04"/>
      <path d="M14.65 16.06 A5.15 5.15 0 0 1 14.65 8.28"/>
      <path d="M16.35 7.30 A5.15 5.15 0 0 1 23.09 11.19"/>
    </g>
    <g fill="#f6f4f0"><circle cx="22.5" cy="4.4" r="1.8"/><circle cx="9.45" cy="12.45" r="1.8"/><circle cx="22.5" cy="19.4" r="1.8"/></g>
  </svg>
  <div class="pt" style="left:34.5px;letter-spacing:0.1px">Anwendungen</div>
  <div class="pt" style="left:136.4px;letter-spacing:0.3px">Orte</div>
  <div class="pt" style="left:174.3px;letter-spacing:0.35px">System</div>
  <!-- filezilla -->
  <svg style="left:228px;top:0" width="24" height="24" viewBox="0 0 24 24">
    <defs><linearGradient id="fzg" x1="0" y1="0" x2="1" y2="1"><stop offset="0" stop-color="#d40808"/><stop offset="1" stop-color="#a20000"/></linearGradient></defs>
    <rect x="0" y="0" width="24" height="24" fill="url(#fzg)"/>
    <g fill="#5a5853"><circle cx="4" cy="0" r="0.9"/><circle cx="9.2" cy="0" r="0.9"/><circle cx="14.6" cy="0" r="0.9"/><circle cx="20" cy="0" r="0.9"/>
    <circle cx="4" cy="24" r="0.9"/><circle cx="9.2" cy="24" r="0.9"/><circle cx="14.6" cy="24" r="0.9"/><circle cx="20" cy="24" r="0.9"/>
    <circle cx="0" cy="4" r="0.7"/><circle cx="0" cy="9" r="0.7"/><circle cx="0" cy="14" r="0.7"/><circle cx="0" cy="19" r="0.7"/>
    <circle cx="24" cy="4" r="0.7"/><circle cx="24" cy="9" r="0.7"/><circle cx="24" cy="14" r="0.7"/><circle cx="24" cy="19" r="0.7"/></g>
    <path d="M6.8 3.9 L16.6 3.9 L16.1 6.5 L9.3 6.5 L8.8 9.3 L19.4 9.3 L19.0 11.6 L8.4 11.6 L6.9 18.9 L3.9 18.9 Z" fill="#fff"/>
    <path d="M19.4 11.3 L12.6 17 L18.7 17 L18.2 19.9 L9.4 19.9 L9.8 17.6 L16.2 11.6 Z" fill="#fff"/>
  </svg>
  <!-- firefox -->
  <svg style="left:252px;top:0" width="24" height="24" viewBox="0 0 24 24">
    <defs><radialGradient id="ffg" cx="0.45" cy="0.2" r="0.8"><stop offset="0" stop-color="#bfefff"/><stop offset="0.45" stop-color="#3e8ed8"/><stop offset="1" stop-color="#0e2e80"/></radialGradient>
    <radialGradient id="ffo" cx="0.75" cy="0.3" r="0.9"><stop offset="0" stop-color="#ffe070"/><stop offset="0.4" stop-color="#f6a030"/><stop offset="1" stop-color="#d84a10"/></radialGradient></defs>
    <circle cx="13" cy="12.2" r="10.6" fill="url(#ffo)"/>
    <circle cx="14.6" cy="9.2" r="7.4" fill="url(#ffg)"/>
    <path d="M3.5 3.5 L5.5 5.2 L10.5 3.5 L12.5 6.5 L10 8.5 L10.5 11 L12 13.5 L16.5 13.5 L13 15.5 L8.5 15 L6 12 L4.5 8 Z" fill="#e8701c"/>
    <path d="M2.4 12 C2.4 18 7 22.8 13 22.8 C18.5 22.8 23 18.5 23.6 13 C22 17.5 17.5 20 12.5 19 C8 18 5.5 15 4.5 11Z" fill="#e46a18"/>
  </svg>
  <!-- chrome -->
  <svg style="left:277px;top:1px" width="22" height="22" viewBox="0 0 22 22">
    <circle cx="11" cy="11" r="10.3" fill="#d6d6d6"/>
    <path d="M11 11 L2.1 5.9 A10.3 10.3 0 0 1 19.9 5.9Z" fill="#db3a2c"/>
    <path d="M11 11 L19.9 5.9 A10.3 10.3 0 0 1 11 21.3Z" fill="#f4cd2a"/>
    <path d="M11 11 L11 21.3 A10.3 10.3 0 0 1 2.1 5.9Z" fill="#3a9a3a"/>
    <circle cx="11" cy="11" r="5" fill="#eee"/>
    <circle cx="11" cy="11" r="3.8" fill="#3d8de0"/>
  </svg>
  <!-- wine -->
  <svg style="left:304px;top:1px" width="16" height="23" viewBox="0 0 16 23">
    <path d="M3.5 1 L12.5 1 C13.5 5 13.5 10 8 12 C2.5 10 2.5 5 3.5 1Z" fill="rgba(230,230,230,.25)" stroke="#d8d8d8" stroke-width="0.9"/>
    <path d="M3.2 6.5 L12.8 6.5 C12.6 9.5 11 11.3 8 12 C5 11.3 3.4 9.5 3.2 6.5Z" fill="#b3101a"/>
    <rect x="7.3" y="12" width="1.4" height="7.5" fill="#cfcfcf"/>
    <ellipse cx="8" cy="20.5" rx="4" ry="1.5" fill="none" stroke="#d8d8d8" stroke-width="1"/>
  </svg>
  <!-- piklab chip -->
  <svg style="left:322.5px;top:-1.5px" width="29.4" height="26.5" viewBox="0 0 60 54">
  <g transform="translate(27.5 25) rotate(-45)">
    <g fill="#eaeaea" stroke="#555" stroke-width="0.6"><rect x="-14" y="10" width="4.5" height="5.5"/><rect x="-6" y="10" width="4.5" height="5.5"/><rect x="2" y="10" width="4.5" height="5.5"/><rect x="10" y="10" width="4.5" height="5.5"/>
    <rect x="-14" y="-15.5" width="4.5" height="5.5"/><rect x="-6" y="-15.5" width="4.5" height="5.5"/><rect x="2" y="-15.5" width="4.5" height="5.5"/><rect x="10" y="-15.5" width="4.5" height="5.5"/></g>
    <rect x="-18" y="-10.5" width="36" height="21" fill="#0c0c0c" stroke="#8a8a8a" stroke-width="0.9"/>
  </g>
  <path d="M6.5 11.5 L11.5 6.5 L25 20 L29.5 16 L31.5 31.5 L16 29.5 L20 25 Z" fill="#f6f000"/>
  </svg>
  <!-- help -->
  <svg style="left:349px;top:1px" width="22" height="22" viewBox="0 0 22 22">
    <defs><linearGradient id="hg" x1="0" y1="0" x2="0" y2="1"><stop offset="0" stop-color="#6fa3dc"/><stop offset="1" stop-color="#2f6aa8"/></linearGradient></defs>
    <circle cx="11" cy="11" r="10.5" fill="url(#hg)" stroke="#3a6ea6" stroke-width="0.6"/>
    <text x="11" y="17.2" font-family="Liberation Sans" font-weight="bold" font-size="16" fill="#fff" text-anchor="middle">?</text>
  </svg>
  <!-- lazarus cheetah -->
  <svg style="left:372px;top:0" width="24" height="24" viewBox="0 0 24 24"><use href="#cheetah"/></svg>

  <!-- right side -->
  <div class="abs" style="left:921px;top:9px;width:3px;height:8px;background:repeating-linear-gradient(#2a2926 0 1px,transparent 1px 3px)"></div>
  <svg style="left:930px;top:4px" width="18" height="17" viewBox="0 0 18 17">
    <g fill="none" stroke="#dfdbd2" stroke-width="1.9" stroke-linecap="round">
      <path d="M1.2 5.6 A11 11 0 0 1 16.8 5.6"/>
      <path d="M3.8 8.6 A7.2 7.2 0 0 1 14.2 8.6"/>
      <path d="M6.3 11.4 A3.8 3.8 0 0 1 11.7 11.4"/>
    </g>
    <path d="M9 16 L6.8 13.6 A3 3 0 0 1 11.2 13.6Z" fill="#dfdbd2"/>
  </svg>
  <svg style="left:962px;top:3px" width="10" height="18" viewBox="0 0 10 18">
    <path d="M1 5 L8.5 12.5 L4.8 16.5 L4.8 1.5 L8.5 5.5 L1 13" fill="none" stroke="#dfdbd2" stroke-width="1.3"/>
  </svg>
  <svg style="left:993px;top:5px" width="27" height="14" viewBox="0 0 27 14">
    <rect x="0.8" y="0.8" width="22" height="12" rx="2" fill="#e8e2d6" stroke="#dfdbd2" stroke-width="1.5"/>
    <rect x="2.5" y="2.5" width="18.6" height="8.6" fill="#dcd6c8" stroke="#4a4843" stroke-width="0.6"/>
    <rect x="23" y="4" width="3" height="6" rx="1" fill="#dfdbd2"/>
    <path d="M6 3.5 L11 3.5 L12.5 6.3 L17.5 10.5 L10.5 8.6 L9 5.6Z" fill="#5a5852"/>
  </svg>
  <svg style="left:1031px;top:6px" width="17" height="13" viewBox="0 0 17 13">
    <path d="M0.5 4 L3.5 4 L7.5 0.5 L7.5 12.5 L3.5 9 L0.5 9Z" fill="#dfdbd2"/>
    <g fill="none" stroke="#dfdbd2" stroke-width="1.8"><path d="M10 3.2 Q11.8 6.5 10 9.8"/><path d="M13.2 1 Q16.6 6.5 13.2 12"/></g>
  </svg>
  <svg style="left:1064px;top:5px" width="20" height="14" viewBox="0 0 20 14">
    <rect x="0.5" y="0.5" width="18.5" height="12.5" rx="1.5" fill="#e6e0d3" stroke="#dfdbd2"/>
    <path d="M1.5 1.5 L9.75 8.5 L18 1.5 M1.5 12.5 L7 6.5 M18 12.5 L12.5 6.5" fill="none" stroke="#4a4843" stroke-width="1"/>
  </svg>
  <div class="pt" style="left:1105px;letter-spacing:0.15px">Fr, 29. Apr, 18:56:09</div>
  <svg style="left:1243px;top:5px" width="20" height="16" viewBox="0 0 20 16">
    <circle cx="8.5" cy="7.6" r="6.4" fill="#e8e2d4"/>
    <path d="M11.5 12 L18.5 14.6 L13.8 9.5Z" fill="#e8e2d4"/>
    <path d="M6 5.1 L11 10.1 M11 5.1 L6 10.1" stroke="#3c3b37" stroke-width="1.7"/>
  </svg>
  <div class="pt" style="left:1266.4px;letter-spacing:0.8px">maik81ftl</div>
  <svg style="left:1342px;top:5px" width="16" height="15" viewBox="0 0 16 15">
    <path d="M4.2 3.2 A6.2 6.2 0 1 0 11.8 3.2" fill="none" stroke="#dfdbd2" stroke-width="2"/>
    <path d="M8 0.3 L8 7.5" stroke="#dfdbd2" stroke-width="2"/>
  </svg>
</div>

<!-- BOTTOM PANEL -->
<div id="bot">
  <svg style="left:1px;top:2px" width="23" height="21" viewBox="0 0 23 21">
    <defs><radialGradient id="sdg" cx="0.6" cy="0.6" r="0.7"><stop offset="0" stop-color="#e27ee0"/><stop offset="1" stop-color="#9a2a98"/></radialGradient></defs>
    <rect x="0.5" y="0.5" width="22" height="20" rx="1.5" fill="url(#sdg)" stroke="#5a1a58"/>
    <rect x="1" y="1" width="21" height="2.6" fill="#efe9c8"/>
    <rect x="2" y="6" width="3" height="3.5" fill="#f4eef4"/><rect x="2" y="11" width="3" height="3.5" fill="#f4eef4"/>
  </svg>
  <div class="abs" style="left:27px;top:8px;width:4px;height:9px;background:repeating-linear-gradient(#2a2926 0 1px,transparent 1px 3px)"></div>
  <div class="abs" style="left:35px;top:1px;width:202px;height:22px;border-radius:3px;background:linear-gradient(#3e3d39,#353430);box-shadow:inset 0 0 0 1px #2f2e2b, 0 1px 0 rgba(255,255,255,.08)"></div>
  <svg style="left:39px;top:4px" width="16" height="16" viewBox="0 0 16 16">
    <path d="M8 0.5 L10.2 4.2 L14.5 4.2 L12.3 8 L14.5 11.8 L10.2 11.8 L8 15.5 L5.8 11.8 L1.5 11.8 L3.7 8 L1.5 4.2 L5.8 4.2Z" fill="#8fb4ea" stroke="#3e6cc0" stroke-width="0.8"/>
    <circle cx="8" cy="8" r="4.3" fill="#e8eef8"/>
    <g fill="#222"><circle cx="6" cy="7" r="1.2"/><circle cx="10" cy="7" r="1.2"/><rect x="6.5" y="9.5" width="3" height="1.4"/></g>
  </svg>
  <div class="pt" style="left:63px;top:3px;letter-spacing:0.1px">Lazarus</div>
  <div class="abs" style="left:1300px;top:1px;width:20px;height:10px;background:#b7a893;border:1px solid #fff"></div>
  <div class="abs" style="left:1320px;top:1px;width:19px;height:10px;background:#7c6e5c"></div>
  <div class="abs" style="left:1326px;top:4px;width:7px;height:4px;background:#c9bca9;border:1px solid #fff"></div>
  <div class="abs" style="left:1300px;top:12px;width:20px;height:10px;background:#b7a893;border:1px solid #fff"></div>
  <div class="abs" style="left:1320px;top:12px;width:19px;height:10px;background:#2a2927"></div>
  <svg style="left:1343px;top:1px" width="22" height="23" viewBox="0 0 22 23">
    <defs><linearGradient id="trg" x1="0" y1="0" x2="1" y2="1"><stop offset="0" stop-color="#f2f2f2"/><stop offset="0.5" stop-color="#c6c9c4"/><stop offset="1" stop-color="#e8e8e8"/></linearGradient></defs>
    <path d="M1.5 2.5 L20.5 2.5 L18.5 21.5 L3.5 21.5Z" fill="url(#trg)" stroke="#9a9d98" stroke-width="0.8"/>
    <ellipse cx="11" cy="2.6" rx="9.6" ry="2" fill="#cfd2cd" stroke="#8f928d" stroke-width="0.9"/>
    <g fill="#fbfbfb" opacity=".8"><circle cx="7" cy="9" r="2.2"/><circle cx="13" cy="12" r="2.6"/><circle cx="8" cy="16" r="2.3"/><circle cx="15" cy="18" r="1.8"/></g>
  </svg>
</div>

<!-- LAZARUS SPLASH (under dialog) -->
<div class="abs" style="left:459px;top:505px;width:448px;box-shadow:-1px 0 0 rgba(0,0,0,.6);height:28px;background:linear-gradient(#22407a 0,#24407c 9.7px,#e8e6e4 10.3px,#e4e4e4 12px,#fff 18px,#fff)"></div>
<svg style="left:793px;top:505px" width="62" height="28" viewBox="0 0 62 28">
  <defs><linearGradient id="wood" x1="0" y1="0" x2="1" y2="0"><stop offset="0" stop-color="#b89a64"/><stop offset="0.3" stop-color="#e0c890"/><stop offset="0.55" stop-color="#a88a56"/><stop offset="0.8" stop-color="#d8bc84"/><stop offset="1" stop-color="#8a6c40"/></linearGradient></defs>
  <rect width="62" height="28" fill="url(#wood)"/>
  <g stroke="#7a5a30" stroke-width="0.8" opacity=".7"><path d="M8 0 V28 M16 4 V28 M24 0 V28 M33 2 V28 M41 0 V28 M50 3 V28 M56 0 V28"/></g>
</svg>
<div class="abs" style="left:854px;top:514px;width:53px;height:18px;overflow:hidden;font-weight:bold;font-size:14.5px;line-height:18px;color:#1010f0;white-space:pre;letter-spacing:0.4px">0.9.30-0</div>

<!-- DIALOG -->
<div id="dlg">
  <div class="tb"></div>
  <svg style="left:11.5px;top:5.8px" width="17" height="17" viewBox="0 0 17 17">
    <defs><radialGradient id="clg" cx="0.45" cy="0.3" r="0.7"><stop offset="0" stop-color="#f8b08a"/><stop offset="0.6" stop-color="#ee6a34"/><stop offset="1" stop-color="#d9501a"/></radialGradient></defs>
    <circle cx="8.5" cy="8.5" r="8.2" fill="#2a2926" opacity=".8"/>
    <circle cx="8.5" cy="8.5" r="6.8" fill="url(#clg)" stroke="#7a3a1a" stroke-width="0.5"/>
    <path d="M6.2 6.2 L10.8 10.8 M10.8 6.2 L6.2 10.8" stroke="#4a2818" stroke-width="1.1"/>
  </svg>
  <div class="tt">Multiple lazarus found</div>
  <svg style="left:16px;top:43px" width="42" height="50" viewBox="0 0 42 50">
    <defs><linearGradient id="qg" x1="0" y1="0" x2="0" y2="1"><stop offset="0" stop-color="#77a6dc"/><stop offset="1" stop-color="#2f6dab"/></linearGradient>
    <radialGradient id="qsh" cx="0.5" cy="0.5" r="0.5"><stop offset="0" stop-color="#000" stop-opacity=".18"/><stop offset="1" stop-color="#000" stop-opacity="0"/></radialGradient></defs>
    <ellipse cx="21" cy="42" rx="19" ry="6" fill="url(#qsh)"/>
    <circle cx="21" cy="21" r="19.6" fill="url(#qg)" stroke="#2b5f98" stroke-width="0.9"/>
    <path d="M14 16 Q14.3 8.2 21.5 8.2 Q28.8 8.4 28.8 15 Q28.8 19 25.2 21.3 Q22.4 23.3 22.3 27 L19.7 27 Q19.3 22.2 22.6 19.6 Q25.3 17.4 25.3 15 Q25.3 11.3 21.4 11.3 Q17.8 11.3 17.6 16Z" fill="#fff"/>
    <circle cx="21" cy="32.8" r="2.6" fill="#fff"/>
  </svg>
  <div class="msg"><span style="letter-spacing:-0.05px">Which Lazarus should be started?</span>

<span style="letter-spacing:0.21px">The system default executable</span>
<span style="letter-spacing:0.05px">/usr/lib/lazarus/0.9.30/lazarus</span>
<span style="letter-spacing:0.14px">(date: 28-4-11 12:11:09)</span>

<span style="letter-spacing:0.11px">Or your custom executable</span>
<span style="letter-spacing:0.19px">/home/maik81ftl/.lazarus/bin/lazarus</span>
<span style="letter-spacing:0.12px">(date: 26-4-11 08:39:35)</span></div>
  <div class="btn" style="left:14px;width:151px">Abort</div>
  <div class="btn" style="left:173px;width:151px;letter-spacing:0.32px;text-indent:0.32px">Start my custom</div>
  <div class="btn" style="left:332px;width:151px;letter-spacing:0.37px;text-indent:0.37px;border-color:#8f7f6e;background:linear-gradient(#d9c3b4,#bfa594 55%,#b09684);box-shadow:inset 0 0 0 1px rgba(230,210,195,.6), inset 0 0 0 2px #ea8468">Start system default</div>
</div>

</body></html>
